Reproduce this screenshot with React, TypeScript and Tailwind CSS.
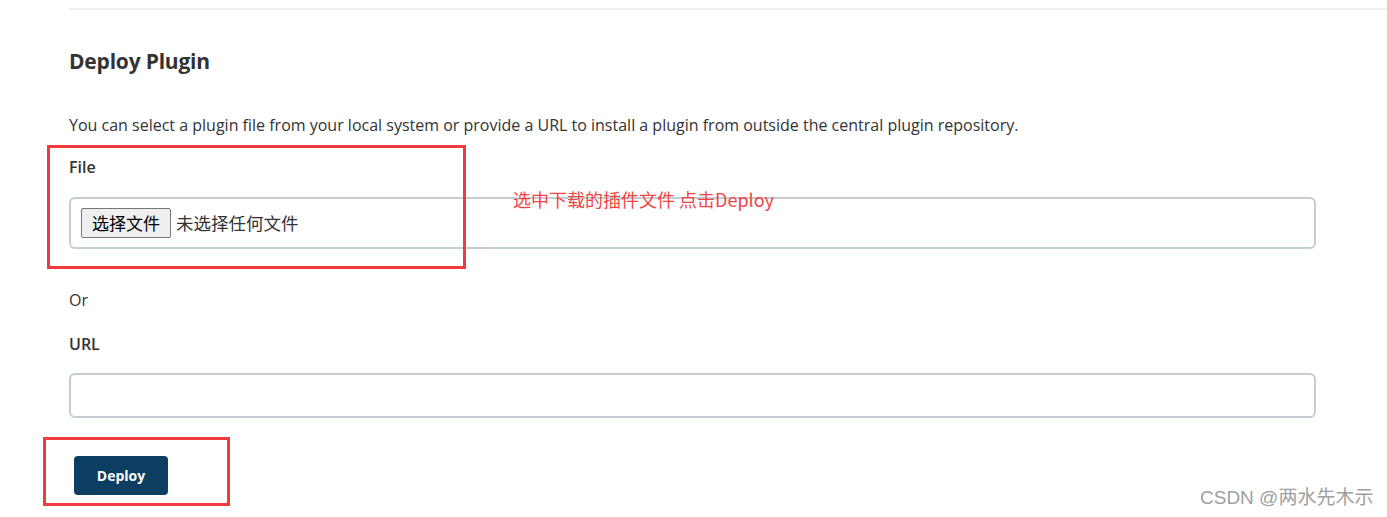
import React from "react";

export default function App() {
  const sans = { fontFamily: '"Open Sans", "Noto Sans", "Noto Sans CJK SC", sans-serif' };
  const cjk = { fontFamily: '"Noto Sans CJK SC", sans-serif' };
  return (
    <div className="relative w-[1387px] h-[517px] overflow-hidden bg-white text-[#333]" style={sans}>
      <div className="flex flex-col pt-[8px] pl-[69px]">
        <div className="border-t-2 border-[#eeeeee]" />
        <div className="flex flex-col mr-[71px]">
          <h2 className="mt-[37px] text-[21px] leading-[28px] font-bold text-[#333] tracking-[-0.2px]">Deploy Plugin</h2>
          <p className="mt-[38px] text-[16px] leading-[24px] text-[#333]">
            You can select a plugin file from your local system or provide a URL to install a plugin from outside the central plugin repository.
          </p>
          <div className="flex flex-col gap-[18px] mt-[18px]">
            <label className="text-[16px] leading-[24px] font-semibold text-[#333]">File</label>
            <div className="h-[52px] rounded-[6px] border-2 border-[#c3cdd3] flex items-center gap-[5px] pl-[10px]">
              <span
                className="h-[30px] px-[10px] flex items-center border border-[#767676] rounded-[2px] bg-[#efefef] text-[17px] text-black"
                style={cjk}
              >
                选择文件
              </span>
              <span className="text-[17.5px] text-[#333]" style={cjk}>
                未选择任何文件
              </span>
            </div>
          </div>
          <div className="mt-[39px] text-[16px] leading-[24px] text-[#333]">Or</div>
          <div className="flex flex-col gap-[17px] mt-[20px]">
            <label className="text-[16px] leading-[24px] font-semibold text-[#333]">URL</label>
            <div className="h-[45px] rounded-[6px] border-2 border-[#c3cdd3]" />
          </div>
          <div className="flex mt-[38px] pl-[5px]">
            <button className="w-[94px] h-[39px] rounded-[4px] bg-[#0b3e60] text-white text-[14px] font-bold flex items-center justify-center">
              Deploy
            </button>
          </div>
        </div>
      </div>

      {/* annotations drawn over the screenshot */}
      <div className="absolute left-[47px] top-[145px] w-[419px] h-[124px] border-[3px] border-[#ef3b3d]" />
      <div className="absolute left-[43px] top-[437px] w-[187px] h-[69px] border-[3px] border-[#ef3b3d]" />
      <div className="absolute left-[513px] top-[187px] text-[18px] leading-[24px] text-[#f04444]" style={cjk}>
        选中下载的插件文件 点击Deploy
      </div>
      <div
        className="absolute left-[1200px] top-[486px] text-[19px] leading-[24px] text-[#a0a0a0]"
        style={{ fontFamily: '"Liberation Sans", "Noto Sans CJK SC", sans-serif' }}
      >
        CSDN @两水先木示
      </div>
    </div>
  );
}
